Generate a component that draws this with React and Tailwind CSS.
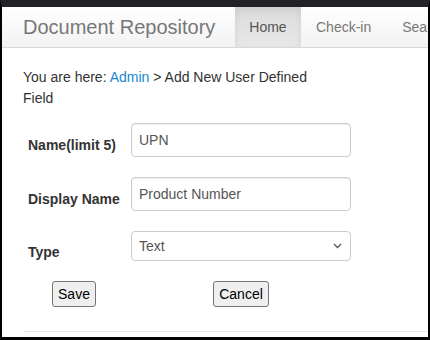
import React from "react";

export default function App() {
  const font = { fontFamily: '"Liberation Sans", Arial, sans-serif' };
  return (
    <div
      className="w-[430px] h-[340px] overflow-hidden bg-white border-t-[7px] border-t-[#232327] border-l-[2px] border-r-[2px] border-b-[3px] border-l-black border-r-black border-b-black"
      style={font}
    >
      <div className="h-[41px] flex border-b border-[#d8d8d8] bg-gradient-to-b from-white to-[#f2f2f2] whitespace-nowrap overflow-hidden">
        <div className="pl-[21px] w-[233px] shrink-0 flex items-center text-[20px] text-[#777]">Document Repository</div>
        <div className="w-[66px] shrink-0 flex items-center justify-center text-[14px] text-[#555] bg-gradient-to-b from-[#dcdcdc] to-[#e8e8e8] shadow-[inset_0_3px_9px_rgba(0,0,0,0.075)]">Home</div>
        <div className="px-[15px] shrink-0 flex items-center text-[14px] text-[#777]">Check-in</div>
        <div className="pl-[16px] pr-[15px] shrink-0 flex items-center text-[14px] text-[#777]">Search</div>
      </div>

      <div className="pl-[21px] pt-[19px] text-[14px] leading-[21px] text-[#333] w-[312px]">
        You are here: <span className="text-[#1a86d0]">Admin</span> &gt; Add New User Defined Field
      </div>

      <div className="pl-[26px] mt-[14px]">
        <div className="flex items-start h-[54px]">
          <div className="w-[103px] pt-[12px] text-[14px] font-bold text-[#333]">Name(limit 5)</div>
          <div className="w-[220px] h-[34px] border border-[#ccc] rounded-[4px] px-[7px] flex items-center text-[14px] text-[#555] shadow-[inset_0_1px_1px_rgba(0,0,0,0.075)]">UPN</div>
        </div>
        <div className="flex items-start h-[54px]">
          <div className="w-[103px] pt-[12px] text-[14px] font-bold text-[#333]">Display Name</div>
          <div className="w-[220px] h-[34px] border border-[#ccc] rounded-[4px] px-[7px] flex items-center text-[14px] text-[#555] shadow-[inset_0_1px_1px_rgba(0,0,0,0.075)]">Product Number</div>
        </div>
        <div className="flex items-start h-[50px]">
          <div className="w-[103px] pt-[11px] text-[14px] font-bold text-[#333]">Type</div>
          <div className="w-[220px] h-[30px] border border-[#ccc] rounded-[4px] pl-[7px] pr-[8px] flex items-center justify-between text-[14px] text-[#555]">
            <span>Text</span>
            <svg width="9" height="6" viewBox="0 0 9 6" fill="none" stroke="#555" strokeWidth="1.3">
              <path d="M1 1 L4.5 4.5 L8 1" />
            </svg>
          </div>
        </div>
      </div>

      <div className="flex pl-[50px] h-[26px]">
        <div className="w-[44px] h-[26px] border border-[#767676] rounded-[3px] bg-[#efefef] flex items-center justify-center text-[14px] text-black">Save</div>
        <div className="ml-[117px] w-[56px] h-[26px] border border-[#767676] rounded-[3px] bg-[#efefef] flex items-center justify-center text-[14px] text-black">Cancel</div>
      </div>

      <div className="ml-[21px] mt-[24px] border-t border-[#e8e8e8]"></div>
    </div>
  );
}
